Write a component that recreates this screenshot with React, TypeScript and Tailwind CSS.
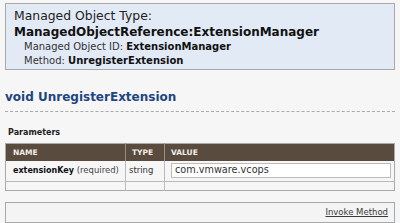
export default function App() {
  return (
    <div className="h-[223px] w-[400px] overflow-hidden bg-[#f6f6f6] px-[5px] pt-[3px] font-['DejaVu_Sans','Verdana',sans-serif] text-[#222]">
      <div className="h-[67px] border border-[#a9a9a9] bg-[#e2eaf6] pl-[8px] pt-[4px]">
        <div className="text-[12.4px] leading-[16px] text-[#222]">Managed Object Type:</div>
        <div className="text-[12px] font-bold leading-[16px] text-[#111]">ManagedObjectReference:ExtensionManager</div>
        <div className="pl-[10px] text-[10px] leading-[14px] text-[#333]">
          Managed Object ID: <span className="font-bold text-[#111]">ExtensionManager</span>
        </div>
        <div className="pl-[10px] text-[10px] leading-[14px] text-[#333]">
          Method: <span className="font-bold text-[#111]">UnregisterExtension</span>
        </div>
      </div>

      <div className="mt-[18px] border-b border-dashed border-[#aaa] pb-[5px] text-[12px] font-bold leading-[18px] text-[#1d4582]">
        void UnregisterExtension
      </div>

      <div className="mt-[15px] pl-[3px] text-[8px] font-bold leading-[12px] text-[#222]">Parameters</div>

      <table className="mt-[4px] w-full table-fixed border-collapse border border-[#a9a9a9] text-[8.5px]">
        <thead>
          <tr className="h-[17px] bg-[#5a4b3f] text-left text-[7.5px] font-bold uppercase text-[#f2ece6]">
            <th className="w-[120px] border-r border-[#9a8d82] pl-[7px] font-bold">Name</th>
            <th className="w-[39px] border-r border-[#9a8d82] pl-[6px] font-bold">Type</th>
            <th className="pl-[6px] font-bold">Value</th>
          </tr>
        </thead>
        <tbody>
          <tr className="h-[21px] border-b border-[#bbb]">
            <td className="whitespace-nowrap border-r border-[#bbb] pl-[7px] text-[#444]">
              <span className="text-[8px] font-bold text-[#111]">extensionKey</span> (required)
            </td>
            <td className="border-r border-[#bbb] pl-[3px] text-[#333]">string</td>
            <td className="pl-[6px] pr-[3px]">
              <div className="flex h-[15px] items-center border border-[#bbb] bg-white pl-[3px] text-[9.7px] text-[#333]">
                com.vmware.vcops
              </div>
            </td>
          </tr>
          <tr className="h-[9px]">
            <td className="border-r border-[#bbb]"></td>
            <td className="border-r border-[#bbb]"></td>
            <td></td>
          </tr>
        </tbody>
      </table>

      <div className="mt-[11px] flex h-[21px] items-center justify-end border border-[#a9a9a9] bg-[#f4f4f4] pr-[6px]">
        <span className="text-[8.5px] text-[#3a3a3a] underline">Invoke Method</span>
      </div>
    </div>
  );
}
